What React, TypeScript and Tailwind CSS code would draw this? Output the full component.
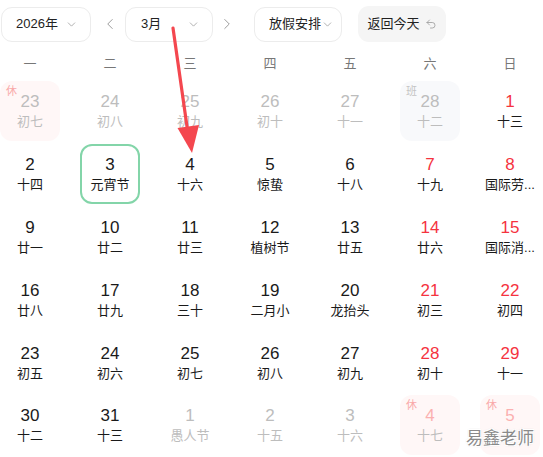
import React from 'react';
import { ChevronDown, ChevronLeft, ChevronRight, Undo2 } from 'lucide-react';

type Day = {
  n: number;
  lunar: string;
  other?: boolean;
  red?: boolean;
  tag?: '休' | '班';
  selected?: boolean;
};

const weeks: Day[][] = [
  [
    { n: 23, lunar: '初七', other: true, tag: '休' },
    { n: 24, lunar: '初八', other: true },
    { n: 25, lunar: '初九', other: true },
    { n: 26, lunar: '初十', other: true },
    { n: 27, lunar: '十一', other: true },
    { n: 28, lunar: '十二', other: true, tag: '班' },
    { n: 1, lunar: '十三', red: true },
  ],
  [
    { n: 2, lunar: '十四' },
    { n: 3, lunar: '元宵节', selected: true },
    { n: 4, lunar: '十六' },
    { n: 5, lunar: '惊蛰' },
    { n: 6, lunar: '十八' },
    { n: 7, lunar: '十九', red: true },
    { n: 8, lunar: '国际劳...', red: true },
  ],
  [
    { n: 9, lunar: '廿一' },
    { n: 10, lunar: '廿二' },
    { n: 11, lunar: '廿三' },
    { n: 12, lunar: '植树节' },
    { n: 13, lunar: '廿五' },
    { n: 14, lunar: '廿六', red: true },
    { n: 15, lunar: '国际消...', red: true },
  ],
  [
    { n: 16, lunar: '廿八' },
    { n: 17, lunar: '廿九' },
    { n: 18, lunar: '三十' },
    { n: 19, lunar: '二月小' },
    { n: 20, lunar: '龙抬头' },
    { n: 21, lunar: '初三', red: true },
    { n: 22, lunar: '初四', red: true },
  ],
  [
    { n: 23, lunar: '初五' },
    { n: 24, lunar: '初六' },
    { n: 25, lunar: '初七' },
    { n: 26, lunar: '初八' },
    { n: 27, lunar: '初九' },
    { n: 28, lunar: '初十', red: true },
    { n: 29, lunar: '十一', red: true },
  ],
  [
    { n: 30, lunar: '十二' },
    { n: 31, lunar: '十三' },
    { n: 1, lunar: '愚人节', other: true },
    { n: 2, lunar: '十五', other: true },
    { n: 3, lunar: '十六', other: true },
    { n: 4, lunar: '十七', other: true, red: true, tag: '休' },
    // the watermark sits over this day's lunar line
    { n: 5, lunar: '', other: true, red: true, tag: '休' },
  ],
];

const weekdays = ['一', '二', '三', '四', '五', '六', '日'];

const DayCell: React.FC<{ d: Day }> = ({ d }) => {
  const box =
    d.tag === '休'
      ? 'bg-[#fff7f7]'
      : d.tag === '班'
      ? 'bg-[#f8f9fb]'
      : d.selected
      ? 'border-2 border-[#83d5a9]'
      : '';
  const numColor = d.red
    ? d.other
      ? 'text-[#fbb0b0]'
      : 'text-[#f5333f]'
    : d.other
    ? 'text-[#bdbdbd]'
    : 'text-[#1a1a1a]';
  const lunarColor = d.other ? 'text-[#bdbdbd]' : 'text-[#1a1a1a]';
  return (
    <div className="h-[62.8px] flex items-center justify-center">
      <div className={`relative w-[60px] h-[60px] rounded-xl flex flex-col items-center justify-center ${box}`}>
        {d.tag && (
          <span
            className={`absolute left-[6px] top-[3px] text-[11px] leading-[14px] ${
              d.tag === '休' ? 'text-[#f9a9a9]' : 'text-[#c4c4c4]'
            }`}
          >
            {d.tag}
          </span>
        )}
        <span className={`text-[17px] leading-[20px] mt-[2px] ${numColor}`}>{d.n}</span>
        <span className={`h-[20px] text-[13px] leading-[20px] whitespace-nowrap ${lunarColor}`}>{d.lunar}</span>
      </div>
    </div>
  );
};

const Select: React.FC<{ label: string; w: string; pl: string; pr: string }> = ({ label, w, pl, pr }) => (
  <div
    className={`h-[35px] ${w} border border-[#ececec] rounded-[11px] flex items-center justify-between ${pl} ${pr} text-[13px] text-[#222] whitespace-nowrap`}
  >
    <span>{label}</span>
    <ChevronDown size={13} strokeWidth={1.4} className="text-[#999] shrink-0" />
  </div>
);

export default function App() {
  return (
    <div
      className="relative w-[543px] h-[457px] overflow-hidden bg-white"
      style={{ fontFamily: '"Liberation Sans", "Noto Sans CJK SC", sans-serif' }}
    >
      <div className="flex items-center pt-[6px] pl-[1px]">
        <Select label="2026年" w="w-[90px]" pl="pl-[14px]" pr="pr-[12px]" />
        <ChevronLeft size={18} strokeWidth={1.3} className="text-[#999] ml-[10px] mr-[6px]" />
        <Select label="3月" w="w-[88px]" pl="pl-[15px]" pr="pr-[12px]" />
        <ChevronRight size={18} strokeWidth={1.3} className="text-[#999] ml-[5px] mr-[18px]" />
        <Select label="放假安排" w="w-[88px]" pl="pl-[14px]" pr="pr-[7px]" />
        <div className="ml-[16px] h-[36px] w-[88px] rounded-[11px] bg-[#f5f5f5] flex items-center justify-center gap-[5px] text-[13px] text-[#222] whitespace-nowrap">
          <span>返回今天</span>
          <Undo2 size={12} strokeWidth={1.6} className="text-[#999]" />
        </div>
      </div>

      <div className="ml-[-10px] w-[560px] mt-[5px]">
        <div className="grid grid-cols-7 h-[33px] items-center">
          {weekdays.map((w) => (
            <div key={w} className="text-center text-[13px] text-[#777]">
              {w}
            </div>
          ))}
        </div>
        {weeks.map((wk, i) => (
          <div key={i} className="grid grid-cols-7">
            {wk.map((d, j) => (
              <DayCell key={j} d={d} />
            ))}
          </div>
        ))}
      </div>

      <svg className="absolute left-0 top-0 pointer-events-none" width="543" height="457">
        <line x1="173" y1="28" x2="187.5" y2="130" stroke="#f4474f" strokeWidth="3.2" strokeLinecap="round" />
        <polygon points="177.5,128 199,125 192,153" fill="#f4474f" />
      </svg>

      <div
        className="absolute left-[466px] top-[426px] text-[17px] text-[#8a8a8a]"
        style={{ textShadow: '1px 1px 0 #fff, -1px -1px 0 #fff, 1px -1px 0 #fff, -1px 1px 0 #fff, 0 0 2px #999' }}
      >
        易鑫老师
      </div>
    </div>
  );
}
